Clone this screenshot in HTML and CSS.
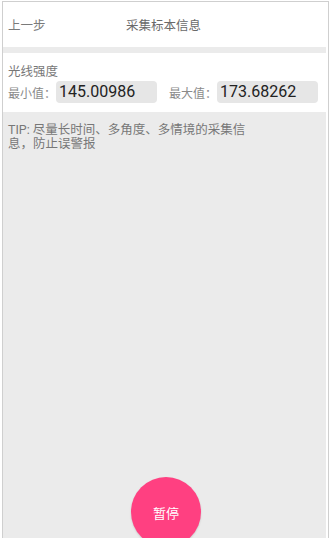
FILE: index.html
```html
<!DOCTYPE html>
<html lang="zh-CN">
<head>
<meta charset="utf-8">
<title>采集标本信息</title>
<link rel="stylesheet" href="styles.css">
</head>
<body>
<div class="frame">
  <header class="header">
    <span class="back">上一步</span>
    <span class="title">采集标本信息</span>
  </header>
  <div class="band"></div>
  <section class="sensor">
    <div class="sensor-name">光线强度</div>
    <div class="range">
      <span class="label">最小值：</span>
      <span class="value">145.00986</span>
      <span class="label label-max">最大值：</span>
      <span class="value">173.68262</span>
    </div>
  </section>
  <main class="content">
    <p class="tip">TIP: 尽量长时间、多角度、多情境的采集信息，防止误警报</p>
  </main>
  <button class="fab">暂停</button>
</div>
</body>
</html>
```
FILE: styles.css
```css
html, body {
  margin: 0;
  padding: 0;
  background: #ffffff;
  overflow: hidden;
}
body {
  font-family: Roboto, "Noto Sans CJK SC", sans-serif;
  color: #777777;
}
.frame {
  position: relative;
  box-sizing: content-box;
  width: 323px;
  height: 537px;
  margin: 1px 0 0 2px;
  padding-right: 2px;
  border: 1px solid #cfcfcf;
  border-bottom: 0;
  display: flex;
  flex-direction: column;
  overflow: hidden;
  background: #ffffff;
}
.header {
  height: 45px;
  flex: none;
  display: flex;
  align-items: center;
  padding-left: 5px;
  font-size: 12.5px;
}
.back {
  width: 118px;
  color: #7a7a7a;
}
.title {
  color: #6a6a6a;
}
.band {
  height: 6px;
  flex: none;
  background: #ebebeb;
}
.sensor {
  flex: none;
  padding: 10px 5px 9px;
}
.sensor-name {
  font-size: 12.5px;
  line-height: 18px;
  color: #777777;
}
.range {
  display: flex;
  align-items: center;
  height: 22px;
}
.label {
  width: 48px;
  font-size: 12px;
  color: #8a8a8a;
}
.label-max {
  margin-left: 12px;
}
.value {
  box-sizing: border-box;
  width: 101px;
  height: 22px;
  line-height: 22px;
  padding-left: 3px;
  border-radius: 4px;
  background: #e6e6e6;
  color: #222222;
  font-size: 16px;
  font-family: Roboto, sans-serif;
}
.content {
  flex: 1;
  background: #ebebeb;
  padding: 11px 5px 0;
}
.tip {
  margin: 0;
  width: 245px;
  font-size: 12.5px;
  line-height: 14px;
  color: #777777;
}
.fab {
  position: absolute;
  top: 475px;
  left: 128px;
  width: 70px;
  height: 70px;
  border: 0;
  border-radius: 50%;
  background: #ff4081;
  color: #ffffff;
  font-family: "Noto Sans CJK SC", sans-serif;
  font-size: 13px;
  padding: 0;
  box-shadow: 0 1px 2px rgba(0, 0, 0, 0.15);
}
```
